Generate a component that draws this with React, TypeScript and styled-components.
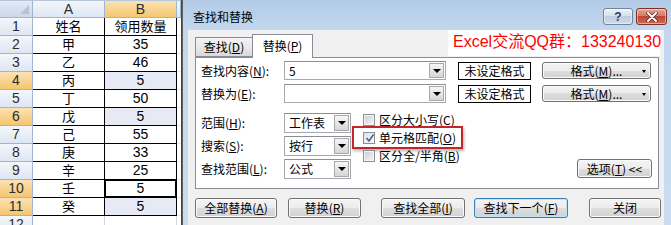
import React from 'react';
import styled, { createGlobalStyle } from 'styled-components';

// --- Global ---
const GlobalStyle = createGlobalStyle`
  html, body {
    margin: 0;
    padding: 0;
    background: #fff;
  }
  body {
    font-family: "Noto Sans CJK SC", "Liberation Sans", sans-serif;
    font-size: 12px;
    color: #000;
  }
  * { box-sizing: border-box; }
`;

const Screen = styled.div`
  display: flex;
  width: 671px;
  height: 225px;
  overflow: hidden;
`;

// --- Spreadsheet ---
const Sheet = styled.div`
  flex: none;
  width: 181px;
  display: flex;
  flex-direction: column;
  background: #fff;
`;

const SheetTop = styled.div`
  height: 3px;
  background: #dfe6ef;
  border-bottom: 1px solid #b7c7db;
`;

const SheetGrid = styled.div`
  display: grid;
  grid-template-columns: 33px 72px 72px 4px;
  grid-template-rows: 17px;
  grid-auto-rows: 18px;
`;

const HeaderCell = styled.div<{ $selected?: boolean; $corner?: boolean }>`
  position: relative;
  display: flex;
  align-items: center;
  justify-content: center;
  overflow: hidden;
  font-family: "Liberation Sans", sans-serif;
  font-size: 14px;
  line-height: 15px;
  color: #2d2d2d;
  border-right: 1px solid #9eb6ce;
  border-bottom: 1px solid #9eb6ce;
  background: ${(p) =>
    p.$corner
      ? 'linear-gradient(#e3eaf4, #cbd8e9)'
      : p.$selected
      ? 'linear-gradient(#fbe2b3, #f4c66f)'
      : 'linear-gradient(#f4f7fb, #dde6f2)'};

  ${(p) =>
    p.$corner &&
    `&::after {
      content: '';
      position: absolute;
      right: 3px;
      bottom: 3px;
      border-left: 9px solid transparent;
      border-bottom: 9px solid #b4c3d6;
    }`}
`;

const DataCell = styled.div<{ $selected?: boolean; $active?: boolean; $plain?: boolean }>`
  display: flex;
  align-items: center;
  justify-content: center;
  overflow: hidden;
  font-family: "Liberation Sans", "Noto Sans CJK SC", sans-serif;
  font-size: 13px;
  line-height: 15px;
  border-right: 1px solid ${(p) => (p.$plain ? '#d0d7e5' : '#000')};
  border-bottom: 1px solid ${(p) => (p.$plain ? '#d0d7e5' : '#000')};
  background: ${(p) => (p.$selected ? '#e7eaf4' : '#fff')};
  box-shadow: ${(p) => (p.$active ? 'inset 0 0 0 1px #000' : 'none')};
`;

const Digits = styled.span`
  font-size: 14px;
`;

const PadCell = styled.div`
  background: #fff;
  border-bottom: 1px solid #e4e9f1;
`;

const WindowEdge = styled.div`
  flex: none;
  width: 2px;
  background: linear-gradient(to right, #3a3a3a, #6b6b6b);
`;

// --- Dialog ---
const Dialog = styled.div`
  flex: 1;
  display: flex;
  flex-direction: column;
  background: linear-gradient(#b3cbe7 0, #c3d7ee 30px, #cadcf1 100%);
`;

const TitleBar = styled.div`
  height: 30px;
  flex: none;
  display: flex;
  align-items: flex-start;
  padding: 0 4px 0 10px;
`;

const Title = styled.div`
  margin-top: 10px;
  font-size: 12px;
  line-height: 14px;
  color: #000;
  flex: 1;
`;

const CaptionButtons = styled.div`
  display: flex;
  gap: 3px;
  margin-top: 8px;
`;

const CaptionButton = styled.div<{ $close?: boolean }>`
  width: ${(p) => (p.$close ? 31 : 30)}px;
  height: 17px;
  border-radius: 3px;
  display: flex;
  align-items: center;
  justify-content: center;
  border: 1px solid ${(p) => (p.$close ? '#7b3128' : '#72849d')};
  background: ${(p) =>
    p.$close
      ? 'linear-gradient(#e5a798, #d27a68 45%, #bb4735 50%, #cb6a57)'
      : 'linear-gradient(#eef3f9, #d6e0ec 45%, #c0cee0 50%, #cfdbea)'};
  box-shadow: inset 0 0 0 1px rgba(255, 255, 255, 0.45);
  color: #2e3c52;
  font-family: "Liberation Sans", sans-serif;
  font-weight: bold;
  font-size: 12px;
  line-height: 12px;
`;

const Body = styled.div`
  position: relative;
  flex: 1;
  margin: 0 7px 0 5px;
  padding: 4px 3px 0 7px;
  background: #f0f0f0;
`;

const Watermark = styled.div`
  position: absolute;
  top: 0;
  left: 260px;
  width: 212px;
  height: 26px;
  padding: 2px 0 0 5px;
  background: #fff;
  color: #ff0000;
  font-family: "Liberation Sans", "Noto Sans CJK SC", sans-serif;
  font-size: 16px;
  line-height: 20px;
  white-space: nowrap;
`;

const Tabs = styled.div`
  display: flex;
  align-items: flex-end;
  height: 23px;
`;

const Tab = styled.div<{ $active?: boolean; $w: number }>`
  position: relative;
  z-index: 1;
  width: ${(p) => p.$w}px;
  height: ${(p) => (p.$active ? 24 : 20)}px;
  margin-bottom: ${(p) => (p.$active ? -1 : 0)}px;
  margin-left: ${(p) => (p.$active ? -1 : 0)}px;
  display: flex;
  align-items: center;
  justify-content: center;
  padding-bottom: ${(p) => (p.$active ? 2 : 0)}px;
  border: 1px solid #898c95;
  border-bottom: ${(p) => (p.$active ? 'none' : '1px solid #898c95')};
  background: ${(p) => (p.$active ? '#fff' : 'linear-gradient(#f3f3f3, #e9e9e9 50%, #d9d9d9)')};
  font-size: 12px;
  line-height: 14px;
`;

const Panel = styled.div`
  width: 464px;
  height: 132px;
  border: 1px solid #898c95;
  background: #fff;
  padding: 3px 6px 0 5px;
`;

const TopGrid = styled.div`
  display: grid;
  grid-template-columns: 72px 162px 74px 109px;
  grid-auto-rows: 19px;
  column-gap: 11px;
  row-gap: 4px;
  align-items: center;
`;

const Label = styled.div`
  font-size: 12px;
  line-height: 14px;
  white-space: nowrap;
`;

const Acc = styled.span`
  text-decoration: underline;
  text-underline-offset: 1px;
`;

const Combo = styled.div<{ $w: number; $h: number }>`
  width: ${(p) => p.$w}px;
  height: ${(p) => p.$h}px;
  display: flex;
  align-items: stretch;
  border: 1px solid #a6a8ae;
  border-top-color: #8b8e94;
  background: #fff;
`;

const ComboValue = styled.div`
  flex: 1;
  display: flex;
  align-items: center;
  padding-left: 4px;
  font-size: 12px;
  line-height: 14px;
`;

const ComboArrow = styled.div`
  width: 15px;
  margin: 1px;
  display: flex;
  align-items: center;
  justify-content: center;
  border: 1px solid #a9a9a9;
  background: linear-gradient(#f6f6f6, #e6e6e6 50%, #d6d6d6);

  &::after {
    content: '';
    border-left: 4px solid transparent;
    border-right: 4px solid transparent;
    border-top: 4px solid #000;
  }
`;

const FormatBox = styled.div`
  height: 18px;
  display: flex;
  align-items: center;
  justify-content: center;
  border: 1px solid #000;
  background: #fff;
  font-size: 12px;
  line-height: 14px;
  margin-left: 1px;
`;

const WinButton = styled.div<{ $w: number; $h?: number; $ml?: number; $default?: boolean; $menu?: boolean }>`
  position: relative;
  flex: none;
  width: ${(p) => p.$w}px;
  height: ${(p) => p.$h ?? 20}px;
  margin-left: ${(p) => p.$ml ?? 0}px;
  display: flex;
  align-items: center;
  justify-content: center;
  border: 1px solid ${(p) => (p.$default ? '#3c7fb1' : '#707070')};
  border-radius: 3px;
  background: linear-gradient(#f4f4f4, #ececec 50%, #dedede 50%, #d2d2d2);
  box-shadow: inset 0 0 0 1px ${(p) => (p.$default ? '#bfe6fb' : '#fbfbfb')};
  font-size: 12px;
  line-height: 14px;
  white-space: nowrap;

  ${(p) =>
    p.$menu &&
    `&::after {
      content: '';
      position: absolute;
      right: 4px;
      top: 7px;
      border-left: 2px solid transparent;
      border-right: 2px solid transparent;
      border-top: 3px solid #000;
    }`}
`;

const LowerSection = styled.div`
  display: flex;
  margin-top: 10px;
`;

const ScopeGrid = styled.div`
  display: grid;
  grid-template-columns: 83px 67px;
  grid-auto-rows: 20px;
  row-gap: 3px;
  align-items: center;
`;

const CheckList = styled.div`
  display: flex;
  flex-direction: column;
  gap: 6px;
  margin-left: 12px;
  padding-top: 1px;
`;

const CheckItem = styled.div<{ $highlight?: boolean }>`
  position: relative;
  display: flex;
  align-items: center;
  gap: 4px;
  height: 12px;
  font-size: 12px;
  line-height: 14px;
  white-space: nowrap;

  ${(p) =>
    p.$highlight &&
    `&::before {
      content: '';
      position: absolute;
      left: -11px;
      right: -3px;
      top: -6px;
      bottom: -5px;
      border: 2px solid #c0262c;
      box-shadow: 1px 2px 3px rgba(0, 0, 0, 0.3);
    }`}
`;

const CheckBox = styled.div`
  width: 12px;
  height: 12px;
  border: 1px solid #8e8f8f;
  padding: 1px;
  background: #f4f4f4;
  display: flex;

  &::before {
    content: '';
    flex: 1;
    background: linear-gradient(135deg, #cbcfd5, #f4f4f4);
  }
`;

const CheckedBox = styled.div`
  position: relative;
  width: 12px;
  height: 12px;
  border: 1px solid #8e8f8f;
  background: linear-gradient(135deg, #dfe2e6, #fafafa);

  svg {
    position: absolute;
    left: 1px;
    top: 0px;
  }
`;

const OptionsButton = styled(WinButton)`
  margin-left: auto;
  align-self: flex-end;
  margin-bottom: 1px;
`;

const ButtonRow = styled.div`
  display: flex;
  margin-top: 9px;
`;

// --- Data ---
const rows: { name: string; qty: string; sel?: boolean; active?: boolean }[] = [
  { name: '姓名', qty: '领用数量' },
  { name: '甲', qty: '35' },
  { name: '乙', qty: '46' },
  { name: '丙', qty: '5', sel: true },
  { name: '丁', qty: '50' },
  { name: '戊', qty: '5', sel: true },
  { name: '己', qty: '55' },
  { name: '庚', qty: '33' },
  { name: '辛', qty: '25' },
  { name: '壬', qty: '5', active: true },
  { name: '癸', qty: '5', sel: true },
];

const bottomButtons = [
  { key: 'all', label: '全部替换', acc: 'A', w: 82, ml: 0 },
  { key: 'rep', label: '替换', acc: 'R', w: 73, ml: 11 },
  { key: 'findall', label: '查找全部', acc: 'I', w: 84, ml: 20 },
  { key: 'next', label: '查找下一个', acc: 'F', w: 94, ml: 9, def: true },
];

const App = () => (
  <Screen>
    <GlobalStyle />
    <Sheet>
      <SheetTop />
      <SheetGrid>
        <HeaderCell $corner />
        <HeaderCell>A</HeaderCell>
        <HeaderCell $selected>B</HeaderCell>
        <HeaderCell />
        {rows.map((r, i) => (
          <React.Fragment key={i}>
            <HeaderCell $selected={!!(r.sel || r.active)}>{i + 1}</HeaderCell>
            <DataCell>{r.name}</DataCell>
            <DataCell $selected={r.sel} $active={r.active}>
              {i === 0 ? r.qty : <Digits>{r.qty}</Digits>}
            </DataCell>
            <PadCell />
          </React.Fragment>
        ))}
        <HeaderCell>12</HeaderCell>
        <DataCell $plain />
        <DataCell $plain />
        <PadCell />
      </SheetGrid>
    </Sheet>
    <WindowEdge />
    <Dialog>
      <TitleBar>
        <Title>查找和替换</Title>
        <CaptionButtons>
          <CaptionButton>?</CaptionButton>
          <CaptionButton $close>
            <svg width="12" height="10" viewBox="0 0 12 10">
              <path d="M2 1 L10 9 M10 1 L2 9" stroke="#5a1d16" strokeWidth="3.4" strokeLinecap="round" />
              <path d="M2 1 L10 9 M10 1 L2 9" stroke="#fff" strokeWidth="2" strokeLinecap="round" />
            </svg>
          </CaptionButton>
        </CaptionButtons>
      </TitleBar>
      <Body>
        <Watermark>Excel交流QQ群：133240130</Watermark>
        <Tabs>
          <Tab $w={58}>
            查找(<Acc>D</Acc>)
          </Tab>
          <Tab $w={61} $active>
            替换(<Acc>P</Acc>)
          </Tab>
        </Tabs>
        <Panel>
          <TopGrid>
            <Label>
              查找内容(<Acc>N</Acc>):
            </Label>
            <Combo $w={162} $h={19}>
              <ComboValue>5</ComboValue>
              <ComboArrow />
            </Combo>
            <FormatBox>未设定格式</FormatBox>
            <WinButton $w={109} $h={17} $menu>
              格式(<Acc>M</Acc>)...
            </WinButton>

            <Label>
              替换为(<Acc>E</Acc>):
            </Label>
            <Combo $w={162} $h={19}>
              <ComboValue />
              <ComboArrow />
            </Combo>
            <FormatBox>未设定格式</FormatBox>
            <WinButton $w={109} $h={17} $menu>
              格式(<Acc>M</Acc>)...
            </WinButton>
          </TopGrid>

          <LowerSection>
            <ScopeGrid>
              <Label>
                范围(<Acc>H</Acc>):
              </Label>
              <Combo $w={67} $h={20}>
                <ComboValue>工作表</ComboValue>
                <ComboArrow />
              </Combo>
              <Label>
                搜索(<Acc>S</Acc>):
              </Label>
              <Combo $w={67} $h={20}>
                <ComboValue>按行</ComboValue>
                <ComboArrow />
              </Combo>
              <Label>
                查找范围(<Acc>L</Acc>):
              </Label>
              <Combo $w={67} $h={20}>
                <ComboValue>公式</ComboValue>
                <ComboArrow />
              </Combo>
            </ScopeGrid>

            <CheckList>
              <CheckItem>
                <CheckBox />
                <span>
                  区分大小写(<Acc>C</Acc>)
                </span>
              </CheckItem>
              <CheckItem $highlight>
                <CheckedBox>
                  <svg width="10" height="10" viewBox="0 0 10 10">
                    <path d="M1.5 5 L4 8 L8.5 1.5" fill="none" stroke="#4b5e9c" strokeWidth="1.6" />
                  </svg>
                </CheckedBox>
                <span>
                  单元格匹配(<Acc>O</Acc>)
                </span>
              </CheckItem>
              <CheckItem>
                <CheckBox />
                <span>
                  区分全/半角(<Acc>B</Acc>)
                </span>
              </CheckItem>
            </CheckList>

            <OptionsButton $w={75} $h={19}>
              选项(<Acc>T</Acc>)&nbsp;&lt;&lt;
            </OptionsButton>
          </LowerSection>
        </Panel>

        <ButtonRow>
          {bottomButtons.map((b) => (
            <WinButton key={b.key} $w={b.w} $ml={b.ml} $default={b.def}>
              {b.label}(<Acc>{b.acc}</Acc>)
            </WinButton>
          ))}
          <WinButton $w={72} $ml={21}>
            关闭
          </WinButton>
        </ButtonRow>
      </Body>
    </Dialog>
  </Screen>
);

export default App;
